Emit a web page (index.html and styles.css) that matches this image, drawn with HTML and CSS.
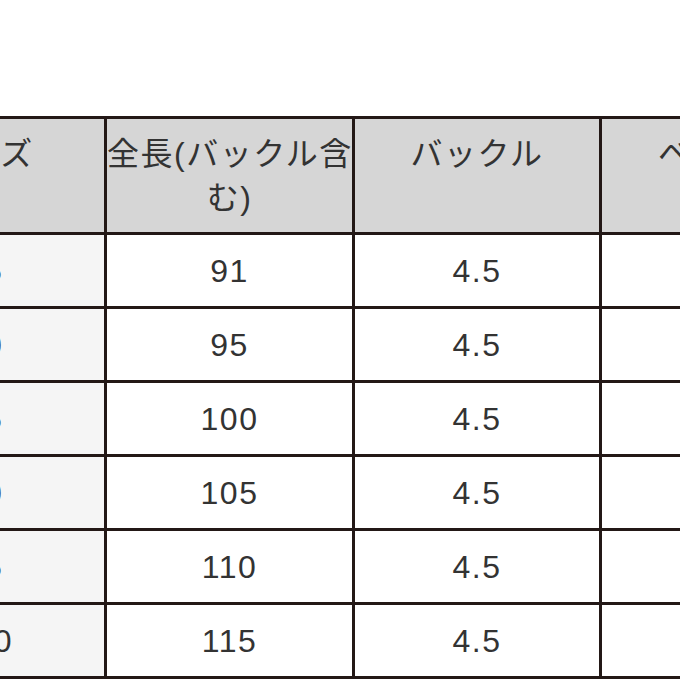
FILE: index.html
```html
<!DOCTYPE html>
<html lang="ja">
<head>
<meta charset="utf-8">
<link rel="stylesheet" href="styles.css">
<title>サイズ表</title>
</head>
<body>
<div class="page">
  <table class="size-table">
    <thead>
      <tr>
        <th class="c1">サイズ</th>
        <th class="c2">全長(バックル含<br>む)</th>
        <th class="c3">バックル</th>
        <th class="c4">ベルト幅</th>
      </tr>
    </thead>
    <tbody>
      <tr><td class="c1">75</td><td class="c2">91</td><td class="c3">4.5</td><td class="c4">3.5</td></tr>
      <tr><td class="c1">80</td><td class="c2">95</td><td class="c3">4.5</td><td class="c4">3.5</td></tr>
      <tr><td class="c1">85</td><td class="c2">100</td><td class="c3">4.5</td><td class="c4">3.5</td></tr>
      <tr><td class="c1">90</td><td class="c2">105</td><td class="c3">4.5</td><td class="c4">3.5</td></tr>
      <tr><td class="c1">95</td><td class="c2">110</td><td class="c3">4.5</td><td class="c4">3.5</td></tr>
      <tr><td class="c1">100</td><td class="c2">115</td><td class="c3">4.5</td><td class="c4">3.5</td></tr>
    </tbody>
  </table>
</div>
</body>
</html>
```
FILE: styles.css
```css
html, body {
  margin: 0;
  padding: 0;
  background: #ffffff;
  overflow: hidden;
}

.page {
  width: 680px;
  height: 680px;
  overflow: hidden;
  padding-top: 116px;
  box-sizing: border-box;
}

.size-table {
  margin-left: -136px;
  border-collapse: separate;
  border-spacing: 0;
  table-layout: fixed;
  width: 987px;
  border-top: 3px solid #231816;
  font-family: "Liberation Sans", "Noto Sans CJK JP", sans-serif;
  font-size: 32px;
  letter-spacing: 1.5px;
  color: #333333;
}

.size-table th,
.size-table td {
  box-sizing: border-box;
  border-right: 3px solid #231816;
  border-bottom: 3px solid #231816;
  text-align: center;
  padding: 0;
  white-space: nowrap;
  font-weight: normal;
}

.size-table th {
  height: 116px;
  background: #d6d6d6;
  vertical-align: top;
  padding-top: 13px;
  line-height: 44px;
}

.size-table td {
  height: 74px;
  background: #ffffff;
  vertical-align: middle;
  line-height: 40px;
}

.size-table td.c1 {
  background: #f5f5f5;
}

.c1 { width: 243px; }
.c2 { width: 248px; }
.c3 { width: 247px; }
.c4 { width: 249px; }
```
